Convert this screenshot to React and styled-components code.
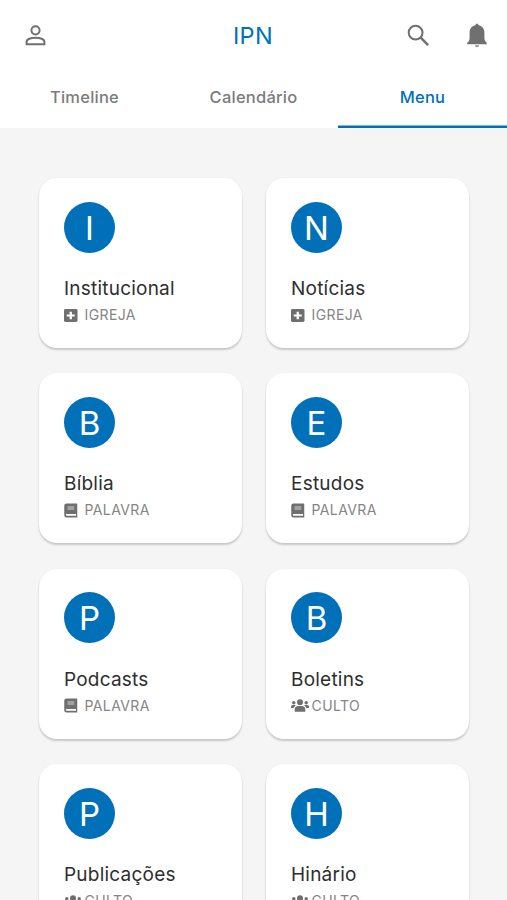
import React from 'react';
import styled, { createGlobalStyle } from 'styled-components';

const blue = '#0070b8';

const GlobalStyle = createGlobalStyle`
  * { box-sizing: border-box; }
  body {
    margin: 0;
    background: #f5f5f5;
    font-family: Inter, sans-serif;
    overflow: hidden;
  }
`;

const Page = styled.div`
  height: 900px;
  overflow: hidden;
`;

const Header = styled.header`
  height: 128px;
  background: #fff;
`;

const Toolbar = styled.div`
  display: grid;
  grid-template-columns: 1fr auto 1fr;
  align-items: center;
  height: 68px;
  padding: 2px 19px 0 18px;
  color: #707070;
`;

const Title = styled.h1`
  margin: 0;
  padding-top: 2px;
  font-size: 23.5px;
  font-weight: 400;
  line-height: 28px;
  letter-spacing: 0.4px;
  color: ${blue};
`;

const IconButton = styled.button`
  display: flex;
  padding: 0;
  border: 0;
  background: none;
  color: inherit;
`;

const ProfileButton = styled(IconButton)`
  padding-left: 6.5px;
`;

const Actions = styled.div`
  display: flex;
  align-items: center;
  justify-content: flex-end;
  gap: 36px;
`;

const Tabs = styled.nav`
  display: grid;
  grid-template-columns: repeat(3, 1fr);
  height: 60px;
`;

const Tab = styled.button`
  padding: 1px 0 3px;
  border: 0;
  box-shadow: ${(p) => (p.$active ? `inset 0 -2.5px 0 ${blue}` : 'none')};
  background: none;
  font: 500 16.5px/20px Inter, sans-serif;
  letter-spacing: 0.23px;
  color: ${(p) => (p.$active ? blue : '#7b7b7b')};
`;

const Grid = styled.main`
  display: grid;
  grid-template-columns: 203px 203px;
  grid-auto-rows: 170px;
  gap: 25.4px 24px;
  padding: 50px 39px;
`;

const Card = styled.article`
  padding: 23.5px 25px;
  border-radius: 18px;
  background: #fff;
  box-shadow: 0 2px 2px rgba(0, 0, 0, 0.18), 0 0 2px rgba(0, 0, 0, 0.05);
`;

const Avatar = styled.div`
  display: flex;
  align-items: center;
  justify-content: center;
  width: 51px;
  height: 51px;
  padding-top: 1px;
  border-radius: 50%;
  background: ${blue};
  color: #fff;
  font-size: 33px;
`;

const CardTitle = styled.h2`
  margin: 24.5px 0 0;
  font-size: 19px;
  font-weight: 400;
  line-height: 24px;
  letter-spacing: 0.22px;
  color: #2e2e2e;
`;

const Category = styled.div`
  display: flex;
  align-items: center;
  height: 20px;
  margin-top: 4px;
  font-size: 14px;
  line-height: 20px;
  letter-spacing: 0.4px;
  color: #858585;
`;

const IconSlot = styled.span`
  display: flex;
  align-items: center;
  flex: 0 0 20.5px;
  height: 20px;
  color: #6f6f6f;
`;

const PersonIcon = () => (
  <svg width="21" height="21" viewBox="0 0 21 21" fill="none" stroke="currentColor" strokeWidth="2">
    <circle cx="10.5" cy="5.3" r="4.1" />
    <path d="M1.6 19.2v-2.5c0-2.5 4.2-4 8.900-4s8.900 1.500 8.900 4v2.500z" />
  </svg>
);

const SearchIcon = () => (
  <svg width="23" height="23" viewBox="0 0 23 23" fill="none" stroke="currentColor">
    <circle cx="8.6" cy="8.6" r="6.9" strokeWidth="2" />
    <path d="M13.7 13.7l7.4 7.4" strokeWidth="2.5" />
  </svg>
);

const BellIcon = () => (
  <svg width="22" height="25" viewBox="0 0 22 25" fill="currentColor">
    <path d="M11 .8c1 0 1.500.6 1.600 1.500C16.300 3 18.400 5.800 18.400 9.500v5.300c0 2.500.8 3.700 2.300 4.700v1.800H1.300v-1.800c1.500-1 2.300-2.200 2.300-4.700V9.500c0-3.700 2.100-6.500 5.800-7.200C9.500 1.400 10 .8 11 .8z" />
    <path d="M8.800 22.300h4.400c-.2 1.200-1 2-2.200 2s-2-.8-2.200-2z" opacity=".75" />
  </svg>
);

const PlusIcon = () => (
  <svg width="13.5" height="13" viewBox="0 0 13 13" preserveAspectRatio="none">
    <rect width="13" height="13" rx="1.4" fill="currentColor" />
    <path d="M6.5 2.7v7.6M2.7 6.5h7.6" stroke="#fff" strokeWidth="2.2" />
  </svg>
);

const BookIcon = () => (
  <svg width="13.5" height="15" viewBox="0 0 13 15">
    <path d="M2.2.5H12.3a.7.7 0 0 1 .7.7V14.5H2.3A2.3 2.3 0 0 1 0 12.2V2.7A2.2 2.2 0 0 1 2.2.5z" fill="currentColor" />
    <path d="M3.3 4h6.7M3.3 6h6.7" stroke="#d4d4d4" />
    <path d="M2.5 10.9h9.3v1.9H2.5a.9.9 0 0 1 0-1.9z" fill="#fff" />
  </svg>
);

const GroupIcon = () => (
  <svg width="18" height="13" viewBox="0 0 18 13" fill="currentColor">
    <circle cx="9" cy="3.3" r="3" />
    <circle cx="2.8" cy="3.7" r="1.7" />
    <circle cx="15.2" cy="3.7" r="1.7" />
    <path d="M3.7 12.7v-2.2c0-2.2 1.5-3.4 3.4-3.4h3.8c1.9 0 3.4 1.2 3.4 3.4v2.2zM0 9V7.7C0 6.7.8 6 1.8 6h2c.5 0 .9.2 1.2.5C3.7 7.1 3 8 2.8 9zM18 9V7.7c0-1-.8-1.7-1.8-1.7h-2c-.5 0-.9.2-1.2.5 1.3.6 2 1.5 2.2 2.5z" />
  </svg>
);

const categoryIcons = {
  IGREJA: PlusIcon,
  PALAVRA: BookIcon,
  CULTO: GroupIcon,
};

const items = [
  ['Institucional', 'IGREJA'],
  ['Notícias', 'IGREJA'],
  ['Bíblia', 'PALAVRA'],
  ['Estudos', 'PALAVRA'],
  ['Podcasts', 'PALAVRA'],
  ['Boletins', 'CULTO'],
  ['Publicações', 'CULTO'],
  ['Hinário', 'CULTO'],
];

function MenuCard({ title, category }) {
  const Icon = categoryIcons[category];
  return (
    <Card>
      <Avatar>{title[0]}</Avatar>
      <CardTitle>{title}</CardTitle>
      <Category>
        <IconSlot><Icon /></IconSlot>
        {category}
      </Category>
    </Card>
  );
}

export default function App() {
  return (
    <Page>
      <GlobalStyle />
      <Header>
        <Toolbar>
          <ProfileButton aria-label="Perfil"><PersonIcon /></ProfileButton>
          <Title>IPN</Title>
          <Actions>
            <IconButton aria-label="Buscar"><SearchIcon /></IconButton>
            <IconButton aria-label="Notificações"><BellIcon /></IconButton>
          </Actions>
        </Toolbar>
        <Tabs>
          <Tab>Timeline</Tab>
          <Tab>Calendário</Tab>
          <Tab $active>Menu</Tab>
        </Tabs>
      </Header>
      <Grid>
        {items.map(([title, category]) => (
          <MenuCard key={title} title={title} category={category} />
        ))}
      </Grid>
    </Page>
  );
}
